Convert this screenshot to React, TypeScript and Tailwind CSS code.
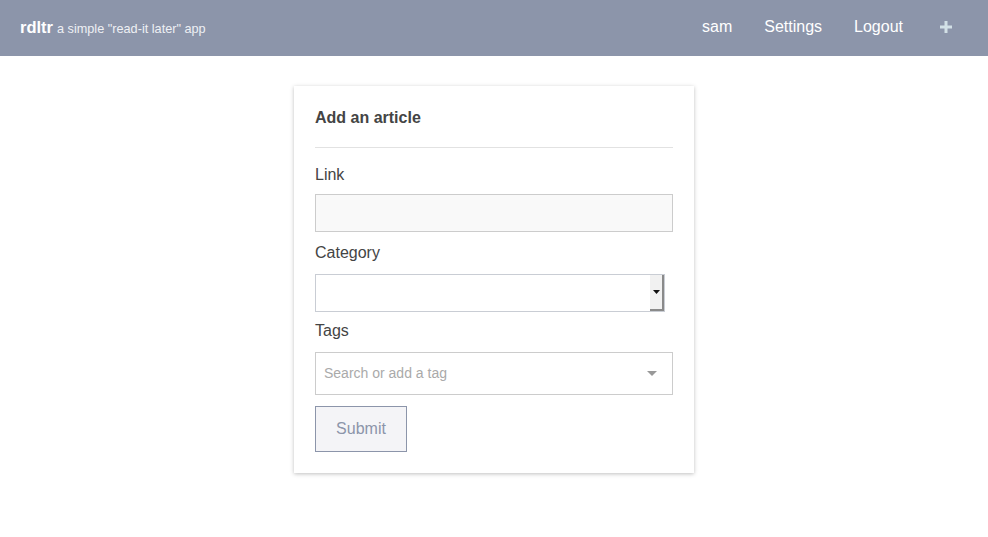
import React from "react";

const font = { fontFamily: '"Liberation Sans", Arial, sans-serif' };

const App = () => {
  return (
    <div className="min-h-screen bg-white text-[#444]" style={font}>
      <nav className="h-14 bg-[#8c95aa] flex items-center px-5 text-white">
        <div className="flex items-baseline -mt-[2px]">
          <span className="text-[16.5px] font-bold">rdltr</span>
          <span className="ml-[4px] text-[12.7px] text-[#eef0f4]">a simple "read-it later" app</span>
        </div>
        <div className="ml-auto flex items-center text-[16px] -mt-[2px]">
          <a className="mr-8">sam</a>
          <a className="mr-8">Settings</a>
          <a className="mr-[36px]">Logout</a>
          <svg width="14" height="14" viewBox="0 0 14 14" className="mr-[15px]">
            <rect x="5.5" y="1" width="3" height="12" fill="#d2e0e6" />
            <rect x="1" y="5.5" width="12" height="3" fill="#d2e0e6" />
          </svg>
        </div>
      </nav>

      <div className="flex justify-center pt-[30px]">
        <div className="w-[400px] bg-white shadow-[0_1px_4px_rgba(0,0,0,0.25)] px-[21px] pt-[22px] pb-[21px]">
          <h2 className="text-[16px] font-bold text-[#444] leading-[20px] pb-[19px] border-b border-[#e2e2e2]">
            Add an article
          </h2>

          <label className="block text-[16px] mt-[17px] leading-[20px]">Link</label>
          <input
            className="block mt-[9px] w-full h-[38px] bg-[#f9f9f9] border border-[#cccccc] outline-none"
            type="text"
          />

          <label className="block text-[16px] mt-[11px] leading-[20px]">Category</label>
          <div className="mt-[11px] w-[350px] h-[38px] flex border border-[#c9cdd4] bg-white">
            <div className="flex-1" />
            <div className="w-[14px] h-full bg-[#f1f1f1] border-r-2 border-b-2 border-[#8a8a8a] flex items-center justify-center">
              <svg width="7" height="4" viewBox="0 0 7 4">
                <path d="M0 0 L7 0 L3.5 4 Z" fill="#111" />
              </svg>
            </div>
          </div>

          <label className="block text-[16px] mt-[9px] leading-[20px]">Tags</label>
          <div className="mt-[11px] w-full h-[43px] flex items-center border border-[#cccccc] pl-[8px] pr-[15px]">
            <span className="text-[14px] text-[#aaaaaa]">Search or add a tag</span>
            <svg width="10" height="5" viewBox="0 0 10 5" className="ml-auto">
              <path d="M0 0 L10 0 L5 5 Z" fill="#999" />
            </svg>
          </div>

          <button className="mt-[11px] w-[92px] h-[46px] bg-[#f4f4f7] border border-[#8c95aa] text-[#8c95aa] text-[16px]">
            Submit
          </button>
        </div>
      </div>
    </div>
  );
};

export default App;
